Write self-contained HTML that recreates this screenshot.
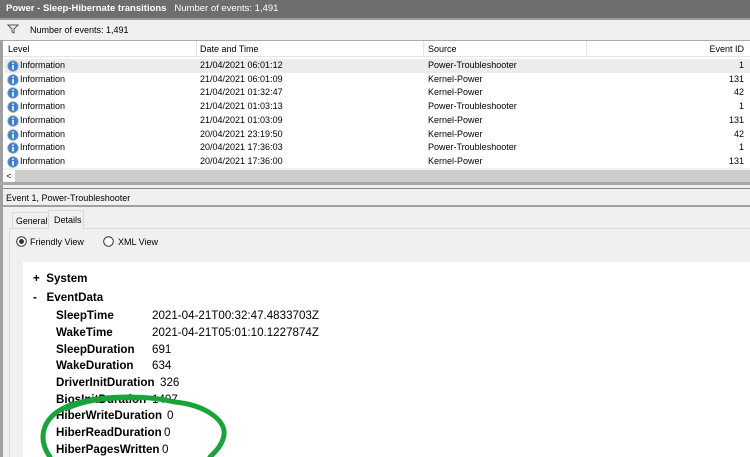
<!DOCTYPE html>
<html><head><meta charset="utf-8"><style>
*{margin:0;padding:0;box-sizing:border-box}
body{width:750px;height:457px;overflow:hidden;background:#f0f0f0;font-family:"Liberation Sans",sans-serif;font-size:9px;color:#000;position:relative}
.a{position:absolute;white-space:nowrap}
.row{position:absolute;left:4px;right:0;height:14px}
.row span{position:absolute;top:1px}
.ic{position:absolute;left:4px;top:1px;width:12px;height:12px}
.b{font-weight:bold;font-size:11.6px}
.v{font-size:11.6px}
</style></head><body>
<div class="a" style="left:0;top:0;width:750px;height:18px;background:#6e6e6e;color:#fff;font-size:9.5px;line-height:17px;padding-left:6px"><b>Power - Sleep-Hibernate transitions</b>&nbsp;&nbsp;&nbsp;Number of events: 1,491</div>
<div class="a" style="left:0;top:18px;width:750px;height:2px;background:#9a9a9a"></div>
<div class="a" style="left:0;top:20px;width:750px;height:20px;background:#f0f0f0"></div>
<svg class="a" style="left:7px;top:24px" width="12" height="10"><path d="M1 1H11L7 5V9L5 8V5Z" fill="none" stroke="#555" stroke-width="1"/></svg>
<div class="a" style="left:30px;top:25px">Number of events: 1,491</div>
<div class="a" style="left:3px;top:40px;width:747px;height:128px;background:#fff;border-top:1px solid #aaa"></div>
<div class="a" style="left:0;top:40px;width:3px;height:417px;background:#a0a0a0"></div>
<div class="a" style="left:3px;top:41px;width:747px;height:16px;background:#fff;border-bottom:1px solid #e5e5e5"></div>
<div class="a" style="left:196px;top:41px;width:1px;height:16px;background:#e5e5e5"></div>
<div class="a" style="left:423px;top:41px;width:1px;height:16px;background:#e5e5e5"></div>
<div class="a" style="left:586px;top:41px;width:1px;height:16px;background:#e5e5e5"></div>
<div class="a" style="left:8px;top:44px">Level</div>
<div class="a" style="left:200px;top:44px">Date and Time</div>
<div class="a" style="left:428px;top:44px">Source</div>
<div class="a" style="right:6px;top:44px">Event ID</div>
<div id="rows"></div>
<div class="a" style="left:3px;top:170px;width:747px;height:12px;background:#cdcdcd"></div>
<div class="a" style="left:3px;top:170px;width:12px;height:12px;background:#fff;font-size:9px;line-height:12px;text-align:center">&lt;</div>
<div class="a" style="left:0;top:182px;width:750px;height:3px;background:#a8a8a8"></div>
<div class="a" style="left:3px;top:188px;width:747px;height:1px;background:#888"></div>
<div class="a" style="left:6px;top:193px">Event 1, Power-Troubleshooter</div>
<div class="a" style="left:3px;top:205px;width:747px;height:2px;background:#a0a0a0"></div>
<div class="a" style="left:9px;top:228px;width:741px;height:1px;background:#d9d9d9"></div>
<div class="a" style="left:12px;top:212px;width:37px;height:16px;border:1px solid #d9d9d9;border-bottom:none;padding:3px 0 0 3px;font-size:8.8px">General</div>
<div class="a" style="left:48px;top:210px;width:36px;height:19px;border:1px solid #d9d9d9;border-bottom:none;background:#f0f0f0;padding:4px 0 0 5px">Details</div>
<div class="a" style="left:9px;top:229px;width:1px;height:228px;background:#d9d9d9"></div>
<svg class="a" style="left:16px;top:236px" width="11" height="11"><circle cx="5.5" cy="5.5" r="4.8" fill="#fff" stroke="#333"/><circle cx="5.5" cy="5.5" r="2.5" fill="#333"/></svg>
<div class="a" style="left:30px;top:237px">Friendly View</div>
<svg class="a" style="left:103px;top:236px" width="11" height="11"><circle cx="5.5" cy="5.5" r="4.8" fill="#fff" stroke="#333"/></svg>
<div class="a" style="left:118px;top:237px">XML View</div>
<div class="a" style="left:23px;top:262px;width:727px;height:195px;background:#fff"></div>
<div class="a b" style="left:33px;top:272px">+&nbsp;&nbsp;System</div>
<div class="a b" style="left:33px;top:291px">-&nbsp;&nbsp;&nbsp;EventData</div>
<div class="a b" style="left:56px;top:309px">SleepTime</div><div class="a v" style="left:152px;top:309px">2021-04-21T00:32:47.4833703Z</div>
<div class="a b" style="left:56px;top:326px">WakeTime</div><div class="a v" style="left:152px;top:326px">2021-04-21T05:01:10.1227874Z</div>
<div class="a b" style="left:56px;top:343px">SleepDuration</div><div class="a v" style="left:152px;top:343px">691</div>
<div class="a b" style="left:56px;top:359px">WakeDuration</div><div class="a v" style="left:152px;top:359px">634</div>
<div class="a b" style="left:56px;top:376px">DriverInitDuration</div><div class="a v" style="left:160px;top:376px">326</div>
<div class="a b" style="left:56px;top:393px">BiosInitDuration</div><div class="a v" style="left:152px;top:393px">1407</div>
<div class="a b" style="left:56px;top:409px">HiberWriteDuration</div><div class="a v" style="left:167px;top:409px">0</div>
<div class="a b" style="left:56px;top:426px">HiberReadDuration</div><div class="a v" style="left:164px;top:426px">0</div>
<div class="a b" style="left:56px;top:443px">HiberPagesWritten</div><div class="a v" style="left:162px;top:443px">0</div>
<svg class="a" style="left:0;top:0" width="750" height="457"><path d="M175 402 C140 394 95 396 68 406 C40 418 38 440 50 457 M175 402 C205 405 226 420 224 435 C222 446 215 452 210 457 M68 408 C85 400 110 397 140 398" fill="none" stroke="#1aa33a" stroke-width="5" stroke-linecap="round"/></svg>
<script>
var d=[["21/04/2021 06:01:12","Power-Troubleshooter","1"],["21/04/2021 06:01:09","Kernel-Power","131"],["21/04/2021 01:32:47","Kernel-Power","42"],["21/04/2021 01:03:13","Power-Troubleshooter","1"],["21/04/2021 01:03:09","Kernel-Power","131"],["20/04/2021 23:19:50","Kernel-Power","42"],["20/04/2021 17:36:03","Power-Troubleshooter","1"],["20/04/2021 17:36:00","Kernel-Power","131"]];
var h="";d.forEach(function(r,i){h+='<div class="row" style="top:'+(59+i*13.7)+'px;'+(i==0?'background:#ececec':'')+'"><svg class="ic" style="left:3px" viewBox="0 0 12 12"><circle cx="6" cy="6" r="5.3" fill="#3d7fd0" stroke="#9aa" stroke-width="0.8"/><rect x="5.2" y="5" width="1.6" height="4.5" fill="#fff"/><rect x="5.2" y="2.5" width="1.6" height="1.5" fill="#fff"/></svg><span style="left:16px">Information</span><span style="left:196px">'+r[0]+'</span><span style="left:424px">'+r[1]+'</span><span style="right:6px">'+r[2]+'</span></div>'});
document.getElementById("rows").innerHTML=h;
</script>
</body></html>
